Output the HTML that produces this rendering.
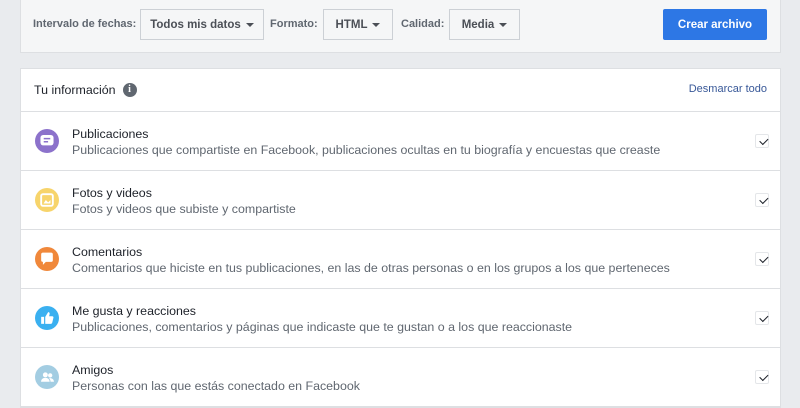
<!DOCTYPE html>
<html><head><meta charset="utf-8"><style>
*{box-sizing:border-box;margin:0;padding:0}
body{width:800px;height:400px;overflow:hidden;background:#e9ebee;font-family:"Liberation Sans",Helvetica,Arial,sans-serif;position:relative}
.top{position:absolute;left:20px;top:-2px;width:761px;height:55px;background:#f5f6f7;border:1px solid #dddfe2;border-top:none}
.lbl{position:absolute;top:18px;font-size:11px;font-weight:bold;color:#606770}
.sel{position:absolute;top:9px;height:31px;border:1px solid #ccd0d5;background:#f5f6f7;font-size:11.5px;font-weight:bold;color:#4b4f56;display:flex;align-items:center;justify-content:center}
.sel:after{content:"";border-left:4px solid transparent;border-right:4px solid transparent;border-top:4px solid #4b4f56;margin-left:5px}
.btn{position:absolute;left:663px;top:9px;width:104px;height:31px;background:#2d77e5;border-radius:2px;color:#fff;font-size:11.5px;font-weight:bold;display:flex;align-items:center;justify-content:center}
.card{position:absolute;left:20px;top:68px;width:761px;height:340px;background:#fff;border:1px solid #dddfe2}
.hdr{height:43px;border-bottom:1px solid #dddfe2;position:relative}
.hdr .t{position:absolute;left:13px;top:14px;font-size:12.4px;color:#1d2129;display:flex;align-items:center}
.info{display:inline-block;width:14px;height:14px;border-radius:50%;background:#606770;color:#fff;font-size:10px;font-weight:bold;text-align:center;line-height:14px;margin-left:7px;font-family:"Liberation Serif",serif}
.hdr .l{position:absolute;right:13px;top:14px;font-size:11px;color:#385898}
.row{height:59px;border-bottom:1px solid #dddfe2;position:relative}
.ic{position:absolute;left:14px;top:17px;width:24px;height:24px;border-radius:50%;display:flex;align-items:center;justify-content:center}
.row .a{position:absolute;left:51px;top:15px;font-size:12.4px;color:#1d2129}
.row .b{position:absolute;left:51px;top:31px;font-size:12.4px;color:#606770}
.ck{position:absolute;left:734px;top:22px;width:14px;height:14px;border:1px solid #e4e6e9;border-radius:2px}
.ck:after{content:"";position:absolute;left:3px;top:1px;width:7px;height:3.5px;border-left:1.6px solid #1d2129;border-bottom:1.6px solid #1d2129;transform:rotate(-45deg) translate(-1px,2px)}
</style></head><body>
<div class="top"></div>
<div class="lbl" style="left:33px">Intervalo de fechas:</div>
<div class="sel" style="left:140px;width:124px">Todos mis datos</div>
<div class="lbl" style="left:270px">Formato:</div>
<div class="sel" style="left:323px;width:70px">HTML</div>
<div class="lbl" style="left:401px">Calidad:</div>
<div class="sel" style="left:449px;width:71px">Media</div>
<div class="btn">Crear archivo</div>
<div class="card">
<div class="hdr"><div class="t">Tu información<span class="info">i</span></div><div class="l">Desmarcar todo</div></div>
<div class="row"><div class="ic" style="background:#8c72cb"><svg width="14" height="12" viewBox="0 0 12 11"><rect x="0" y="0" width="12" height="9.5" rx="2.5" fill="#fff"/><path d="M3 3.3h6M3 6.2h4" stroke="#8c72cb" stroke-width="1.4"/></svg></div><div class="a">Publicaciones</div><div class="b">Publicaciones que compartiste en Facebook, publicaciones ocultas en tu biografía y encuestas que creaste</div><div class="ck"></div></div>
<div class="row"><div class="ic" style="background:#f7d46b"><svg width="14" height="14" viewBox="0 0 12 12"><rect x="1" y="1" width="10" height="10" rx="1.5" fill="none" stroke="#fff" stroke-width="1.6"/><path d="M3 9l2-3 2 2 2-2v3z" fill="#fff"/></svg></div><div class="a">Fotos y videos</div><div class="b">Fotos y videos que subiste y compartiste</div><div class="ck"></div></div>
<div class="row"><div class="ic" style="background:#f0883b"><svg width="14" height="14" viewBox="0 0 12 12"><path d="M1 2a1.5 1.5 0 011.5-1.5h7A1.5 1.5 0 0111 2v5a1.5 1.5 0 01-1.5 1.5H5L2.5 11V8.5A1.5 1.5 0 011 7z" fill="#fff"/></svg></div><div class="a">Comentarios</div><div class="b">Comentarios que hiciste en tus publicaciones, en las de otras personas o en los grupos a los que perteneces</div><div class="ck"></div></div>
<div class="row"><div class="ic" style="background:#3ab0f0"><svg width="14" height="14" viewBox="0 0 12 12"><rect x="1" y="5" width="2.5" height="6" fill="#fff"/><path d="M4.5 5L7 1c1 0 1.5.7 1.2 1.8L7.8 4.5H10.5c.8 0 1.2.6 1 1.3l-1 4.2c-.2.6-.6 1-1.2 1H4.5z" fill="#fff"/></svg></div><div class="a">Me gusta y reacciones</div><div class="b">Publicaciones, comentarios y páginas que indicaste que te gustan o a los que reaccionaste</div><div class="ck"></div></div>
<div class="row"><div class="ic" style="background:#a3cde2"><svg width="15" height="13" viewBox="0 0 14 12"><circle cx="5" cy="3.5" r="2.3" fill="#fff"/><circle cx="9.5" cy="4" r="2" fill="#fff"/><path d="M1 10c0-2.5 2-3.8 4-3.8s4 1.3 4 3.8zM9.8 10c0-1.5-.5-2.6-1.4-3.3 2-.5 4.6.6 4.6 3.3z" fill="#fff"/></svg></div><div class="a">Amigos</div><div class="b">Personas con las que estás conectado en Facebook</div><div class="ck"></div></div>
</div>
</body></html>
